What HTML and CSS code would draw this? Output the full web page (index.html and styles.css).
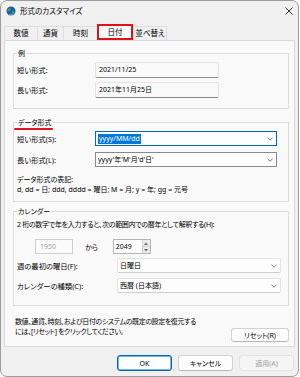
FILE: index.html
```html
<!DOCTYPE html>
<html lang="ja">
<head>
<meta charset="UTF-8" />
<meta name="viewport" content="width=device-width, initial-scale=1" />
<title>形式のカスタマイズ</title>
<link rel="stylesheet" href="styles.css">
</head>
<body>
  <div class="window">
    <div class="titlebar">
      <svg class="app-icon" width="10" height="10" viewBox="0 0 10 10">
        <circle cx="5" cy="5" r="4.5" fill="#1d5fa8" />
        <path d="M1.6 3.2 Q3.4 1.6 5.2 2.6 Q4.6 4.8 2.4 5.6 Q1.4 4.6 1.6 3.2Z" fill="#3fae49" />
        <path d="M5.6 5.4 Q7.6 4.8 8.4 6.2 Q7.4 8.4 6 8.2Z" fill="#3fae49" />
        <path d="M3 8.4 Q5 9.6 7.4 8.6" stroke="#bfe0ff" stroke-width="0.6" fill="none" />
      </svg>
      <span class="title">形式のカスタマイズ</span>
      <svg class="close" width="8" height="8" viewBox="0 0 8 8">
        <path d="M0.5 0.5 L7.5 7.5 M7.5 0.5 L0.5 7.5" stroke="#1a1a1a" stroke-width="0.9" />
      </svg>
    </div>

    <div class="tabs">
      <div class="tab w-num">数値</div>
      <div class="tab w-cur">通貨</div>
      <div class="tab w-time">時刻</div>
      <div class="tab active">日付</div>
      <div class="tab w-sort">並べ替え</div>
    </div>

    <div class="panel">
      <fieldset class="group sample-group">
        <legend>例</legend>
        <div class="row">
          <label>短い形式:</label>
          <div class="sample">2021/11/25</div>
        </div>
        <div class="row">
          <label>長い形式:</label>
          <div class="sample">2021年11月25日</div>
        </div>
      </fieldset>

      <fieldset class="group format-group">
        <legend><span class="marked">データ形式</span></legend>
        <div class="row first">
          <label>短い形式(S):</label>
          <div class="combo focus">
            <span class="selected">yyyy/MM/dd</span>
            <svg class="chev" width="6" height="4" viewBox="0 0 6 4"><path d="M0.5 0.8 L3 3.2 L5.5 0.8" stroke="#555" stroke-width="0.8" fill="none" /></svg>
          </div>
        </div>
        <div class="row second">
          <label>長い形式(L):</label>
          <div class="combo">
            <span>yyyy'年'M'月'd'日'</span>
            <svg class="chev" width="6" height="4" viewBox="0 0 6 4"><path d="M0.5 0.8 L3 3.2 L5.5 0.8" stroke="#555" stroke-width="0.8" fill="none" /></svg>
          </div>
        </div>
        <p class="notation">データ形式の表記:<br>d, dd = 日; ddd, dddd = 曜日; M = 月; y = 年; gg = 元号</p>
      </fieldset>

      <fieldset class="group calendar-group">
        <legend>カレンダー</legend>
        <p class="hint">2 桁の数字で年を入力すると、次の範囲内での暦年として解釈する(H):</p>
        <div class="range">
          <div class="year disabled">1950</div>
          <span class="kara">から</span>
          <div class="year spin">
            <span>2049</span>
            <div class="arrows">
              <span><svg width="4" height="3" viewBox="0 0 4 3"><path d="M0 3 L2 0.5 L4 3Z" fill="#666" /></svg></span>
              <span><svg width="4" height="3" viewBox="0 0 4 3"><path d="M0 0 L2 2.5 L4 0Z" fill="#666" /></svg></span>
            </div>
          </div>
        </div>
        <div class="row cal first">
          <label>週の最初の曜日(F):</label>
          <div class="combo soft">
            <span>日曜日</span>
            <svg class="chev" width="6" height="4" viewBox="0 0 6 4"><path d="M0.5 0.8 L3 3.2 L5.5 0.8" stroke="#555" stroke-width="0.8" fill="none" /></svg>
          </div>
        </div>
        <div class="row cal second">
          <label>カレンダーの種類(C):</label>
          <div class="combo soft">
            <span>西暦 (日本語)</span>
            <svg class="chev" width="6" height="4" viewBox="0 0 6 4"><path d="M0.5 0.8 L3 3.2 L5.5 0.8" stroke="#555" stroke-width="0.8" fill="none" /></svg>
          </div>
        </div>
      </fieldset>

      <div class="reset-row">
        <p class="note">数値、通貨、時刻、および日付のシステムの既定の設定を復元する<br>には、[リセット] をクリックしてください。</p>
        <button class="btn reset">リセット(R)</button>
      </div>
    </div>

    <div class="footer">
      <button class="btn ok">OK</button>
      <button class="btn">キャンセル</button>
      <button class="btn" disabled>適用(A)</button>
    </div>
  </div>
</body>
</html>
```

FILE: styles.css
```css
body {
    margin: 0;
    background-color: #ffffff;
    font-family: "Noto Sans", "Noto Sans CJK JP", sans-serif;
    font-size: 7px;
    font-feature-settings: "palt";
    color: #000000;
}
.window {
    width: 299px;
    height: 377px;
    box-sizing: border-box;
    border: 1px solid #9c9c9c;
    border-radius: 7px;
    background-color: #f0f0f0;
    display: flex;
    flex-direction: column;
    overflow: hidden;
}
.titlebar {
    height: 19px;
    display: flex;
    align-items: center;
    padding-left: 5px;
    gap: 4px;
}
.title {
    font-size: 7.5px;
    line-height: 10px;
}
.close {
    margin-left: auto;
    margin-right: 5px;
}
/* tab strip */
.tabs {
    height: 20px;
    display: flex;
    align-items: flex-end;
    padding-left: 3px;
}
.tab {
    height: 14px;
    box-sizing: border-box;
    border: 1px solid #dedede;
    border-bottom: none;
    border-right: none;
    background-color: #f0f0f0;
    font-size: 7.5px;
    line-height: 13px;
    text-align: center;
}
.w-num { width: 33px; }
.w-cur { width: 26px; }
.w-time { width: 34px; }
.w-sort {
    width: 34px;
    border-right: 1px solid #dedede;
}
.tab.active {
    width: 36px;
    height: 16px;
    border: 2px solid #e3111b;
    background-color: #f9f9f9;
    line-height: 12px;
}
.panel {
    margin: 0 3px;
    border: 1px solid #d9d9d9;
    background-color: #f9f9f9;
    padding: 0 5px 4px 8px;
}
.group {
    margin: 0;
    border: 1px solid #dcdcdc;
    padding: 0 4px 10px 3px;
    min-width: 0;
}
.group legend {
    padding: 0 1px;
    line-height: 9px;
    position: relative;
}
.sample-group { margin-top: 8px; }
.format-group {
    margin-top: 9px;
    padding-bottom: 6px;
}
.calendar-group {
    margin-top: 5px;
    padding-bottom: 12px;
}
/* red hand mark under the legend */
.marked::after {
    content: "";
    position: absolute;
    left: -3px;
    right: 0;
    bottom: -3px;
    height: 2px;
    background-color: #e3111b;
    border-radius: 1px;
}
.row {
    display: flex;
    align-items: center;
    height: 16px;
    margin-top: 4px;
}
.row label {
    width: 78px;
    flex: none;
    font-size: 7.3px;
}
.sample {
    width: 124px;
    height: 16px;
    box-sizing: border-box;
    border: 1px solid #e3e3e3;
    border-bottom-color: #8a8a8a;
    border-radius: 2px;
    background-color: #f9f9f9;
    padding-left: 3px;
    line-height: 14px;
}
.format-group .row {
    height: 15px;
}
.format-group .row.second {
    margin-top: 6px;
}
.combo {
    width: 182px;
    height: 15px;
    box-sizing: border-box;
    border: 1px solid #8a8a8a;
    background-color: #ffffff;
    display: flex;
    align-items: center;
    padding: 0 3px 0 2px;
    line-height: 10px;
}
.combo.focus {
    border-color: #0067c0;
}
.combo .chev {
    margin-left: auto;
}
.selected {
    background-color: #0078d7;
    color: #ffffff;
    padding: 0 1px;
}
.notation {
    margin: 8px 0 0;
    line-height: 10px;
}
.hint {
    margin: 4px 0 0;
    line-height: 10px;
    letter-spacing: -0.3px;
}
.range {
    display: flex;
    align-items: center;
    height: 15px;
    margin: 9px 0 0 18px;
}
.year {
    width: 38px;
    height: 15px;
    box-sizing: border-box;
    border: 1px solid #cfcfcf;
    padding-left: 4px;
    line-height: 13px;
    background-color: #fbfbfb;
}
.year.disabled {
    color: #a0a0a0;
}
.kara {
    margin-left: 12px;
}
.spin {
    margin-left: 15px;
    display: flex;
    padding-left: 2px;
    padding-right: 0;
    background-color: #ffffff;
    border-color: #b5b5b5;
}
.arrows {
    margin-left: auto;
    width: 8px;
    display: flex;
    flex-direction: column;
}
.arrows span {
    flex: 1;
    display: flex;
    align-items: center;
    justify-content: center;
    background-color: #ececec;
    border-left: 1px solid #cfcfcf;
}
.arrows span + span {
    border-top: 1px solid #cfcfcf;
}
.row.cal {
    height: 15px;
}
.row.cal label {
    width: 100px;
}
.row.cal.second {
    margin-top: 5px;
}
.combo.soft {
    width: 164px;
    border: 1px solid #e3e3e3;
    border-bottom-color: #cccccc;
    border-radius: 2px;
    background-color: #fdfdfd;
}
.reset-row {
    display: flex;
    margin-top: 11px;
    padding-left: 2px;
}
.note {
    margin: 0;
    line-height: 10px;
    letter-spacing: -0.4px;
    flex: 1;
}
.btn {
    font-family: inherit;
    font-size: 7px;
    font-feature-settings: "palt";
    color: #000000;
    height: 16px;
    width: 55px;
    padding: 0;
    box-sizing: border-box;
    border: 1px solid #d2d2d2;
    border-bottom-color: #b8b8b8;
    border-radius: 3px;
    background-color: #fdfdfd;
}
.btn.reset {
    width: 58px;
    height: 14px;
    margin-top: 11px;
}
.btn.ok {
    border: 1px solid #0067c0;
    box-shadow: inset 0 0 0 0.5px #0067c0;
}
.btn:disabled {
    color: #a0a0a0;
    background-color: #f5f5f5;
    border-color: #e2e2e2;
}
.footer {
    display: flex;
    justify-content: flex-end;
    gap: 6px;
    padding: 8px 4px 0 0;
}
```
